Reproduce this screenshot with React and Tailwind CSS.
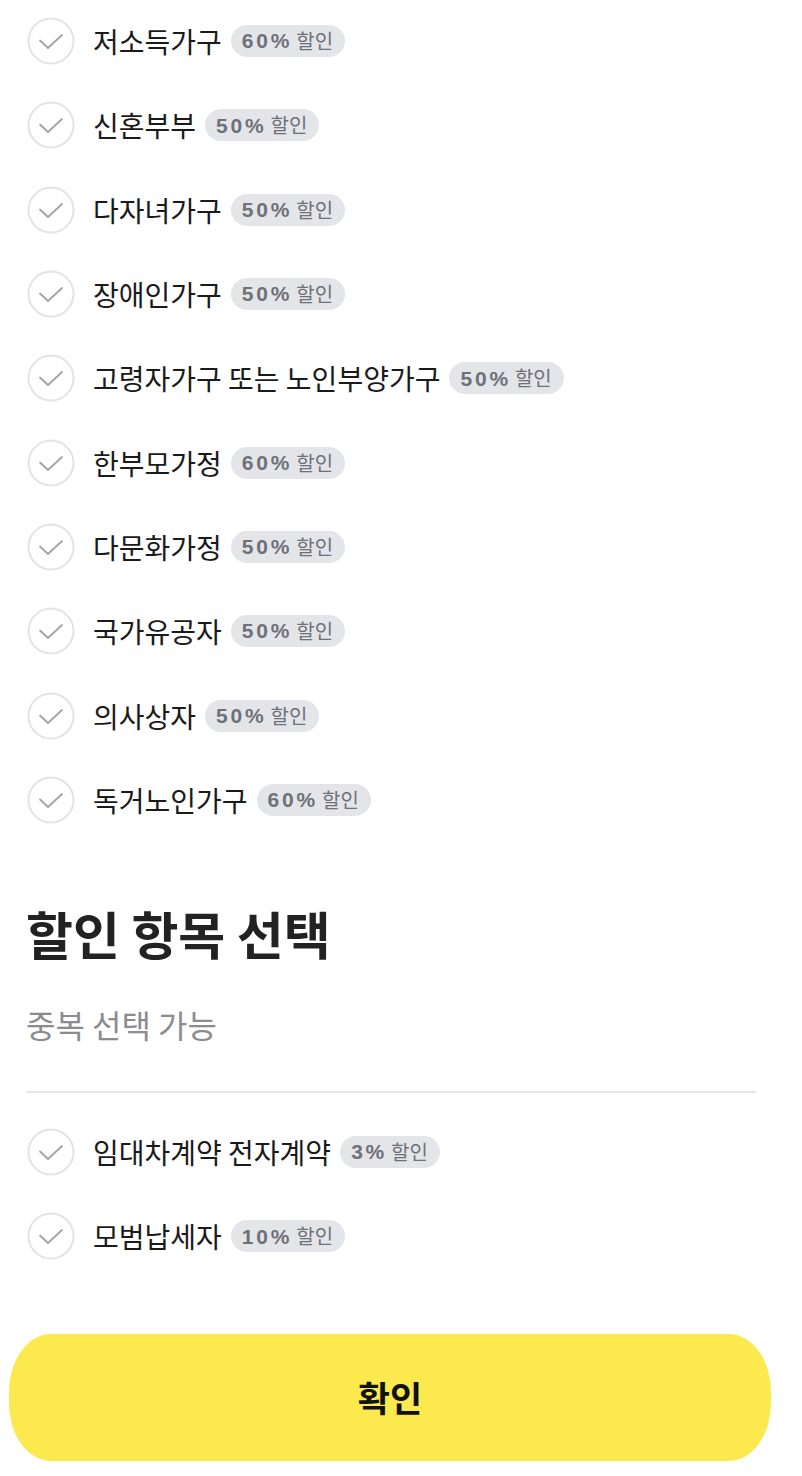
const FONT = "font-['Noto_Sans_CJK_KR','Noto_Sans',sans-serif]";

const groups = [
  ["저소득가구", "60%"],
  ["신혼부부", "50%"],
  ["다자녀가구", "50%"],
  ["장애인가구", "50%"],
  ["고령자가구 또는 노인부양가구", "50%"],
  ["한부모가정", "60%"],
  ["다문화가정", "50%"],
  ["국가유공자", "50%"],
  ["의사상자", "50%"],
  ["독거노인가구", "60%"],
];

const extras = [
  ["임대차계약 전자계약", "3%"],
  ["모범납세자", "10%"],
];

function CheckCircle() {
  return (
    <svg width="48" height="48" viewBox="0 0 48 48" className="shrink-0">
      <circle cx="24" cy="24" r="22.5" fill="none" stroke="#e3e3e6" strokeWidth="2" />
      <path d="M13 23.5l8 7.5 14-13" fill="none" stroke="#a3a3a6" strokeWidth="1.8" strokeLinecap="round" strokeLinejoin="round" />
    </svg>
  );
}

function Row({ label, rate }) {
  return (
    <div className="flex h-[84.3px] items-center">
      <CheckCircle />
      <span className="ml-[18px] text-[28px] text-[#1a1a1a]">{label}</span>
      <span className="ml-[9px] flex h-[32px] items-center rounded-full bg-[#e4e5e9] pl-[11px] pr-[12px] text-[20px] text-[#6f7178]">
        <b className="font-['Liberation_Sans','Noto_Sans_CJK_KR',sans-serif] text-[21px] font-bold tracking-[2.8px]">{rate}</b>
        <span className="ml-[4px]">할인</span>
      </span>
    </div>
  );
}

export default function App() {
  return (
    <div className={`${FONT} h-[1476px] w-[802px] overflow-hidden bg-white`}>
      <div className="mt-[-1px] pl-[27px]">
        {groups.map(([label, rate]) => (
          <Row key={label} label={label} rate={rate} />
        ))}
      </div>

      <div className="px-[26px]">
        <h2 className="mt-[59px] text-[51px] font-bold leading-[64px] text-[#222]">할인 항목 선택</h2>
        <p className="mt-[37px] text-[32px] leading-[44px] text-[#8c8c8f]">중복 선택 가능</p>
        <div className="mt-[45px] h-[2px] w-[730px] bg-[#e6e6e8]" />
      </div>

      <div className="mt-[17px] pl-[27px]">
        {extras.map(([label, rate]) => (
          <Row key={label} label={label} rate={rate} />
        ))}
      </div>

      <button
        type="button"
        className="ml-[9px] mt-[55px] flex h-[127px] w-[762px] items-center justify-center rounded-[42px/58px] bg-[#fbe94e] text-[35px] font-bold text-[#111]"
      >
        확인
      </button>
    </div>
  );
}
